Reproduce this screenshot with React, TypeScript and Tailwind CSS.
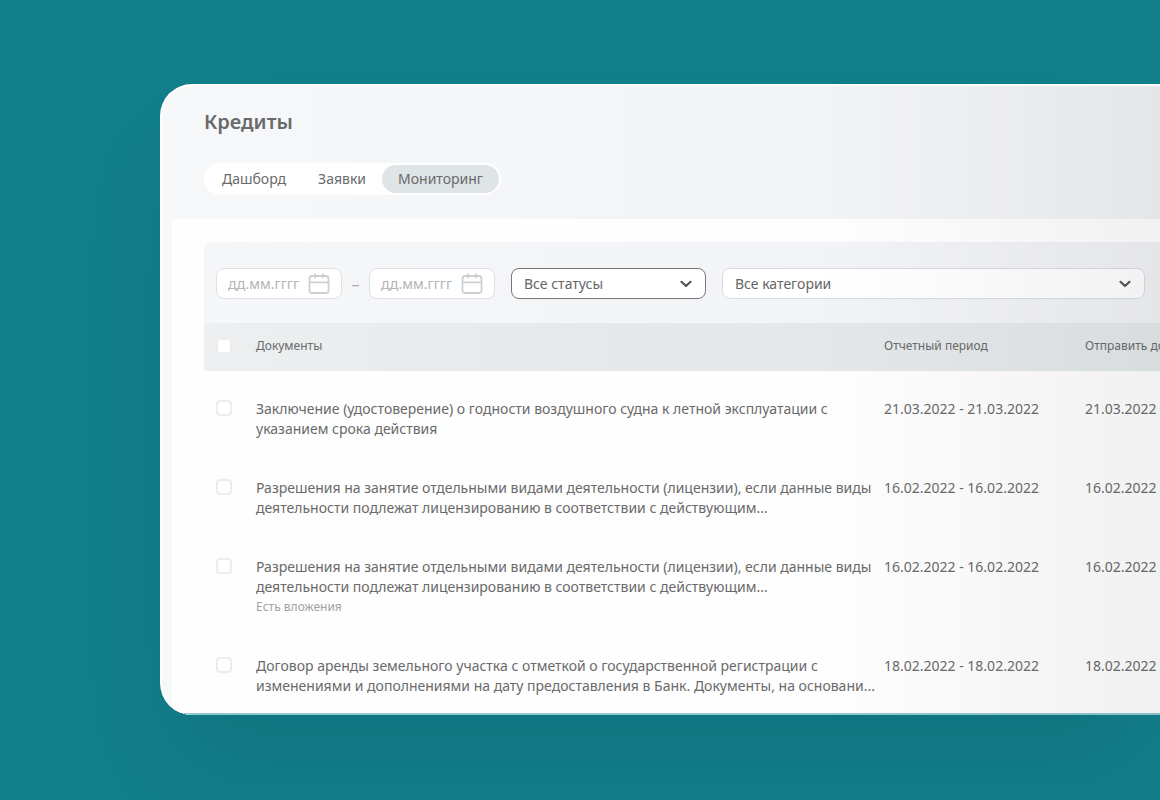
import { useState } from 'react'

const tabs = ['Дашборд', 'Заявки', 'Мониторинг']

const documents = [
  {
    id: 1,
    lines: [
      'Заключение (удостоверение) о годности воздушного судна к летной эксплуатации с',
      'указанием срока действия',
    ],
    period: '21.03.2022 - 21.03.2022',
    deadline: '21.03.2022',
  },
  {
    id: 2,
    lines: [
      'Разрешения на занятие отдельными видами деятельности (лицензии), если данные виды',
      'деятельности подлежат лицензированию в соответствии с действующим...',
    ],
    period: '16.02.2022 - 16.02.2022',
    deadline: '16.02.2022',
  },
  {
    id: 3,
    lines: [
      'Разрешения на занятие отдельными видами деятельности (лицензии), если данные виды',
      'деятельности подлежат лицензированию в соответствии с действующим...',
    ],
    note: 'Есть вложения',
    period: '16.02.2022 - 16.02.2022',
    deadline: '16.02.2022',
  },
  {
    id: 4,
    lines: [
      'Договор аренды земельного участка с отметкой о государственной регистрации с',
      'изменениями и дополнениями на дату предоставления в Банк. Документы, на основани...',
    ],
    period: '18.02.2022 - 18.02.2022',
    deadline: '18.02.2022',
  },
]

function CalendarIcon() {
  return (
    <svg className="h-[22px] w-[22px] shrink-0" viewBox="0 0 22 22" fill="none" stroke="#cdcfd3" strokeWidth="1.8">
      <rect x="1.5" y="3" width="19" height="17" rx="2.5" />
      <path d="M1.5 9.3H20.5M7 0.5V5M15 0.5V5" />
    </svg>
  )
}

function DateField({ label }: { label: string }) {
  return (
    <label className="flex h-[31px] w-[126px] items-center rounded-lg border border-[#dde1e6] bg-white px-[11px]">
      <input
        type="text"
        aria-label={label}
        placeholder="дд.мм.гггг"
        className="min-w-0 flex-1 text-sm text-[#666] outline-none placeholder:text-[#b3b3b6]"
      />
      <CalendarIcon />
    </label>
  )
}

function SelectField({ label, className }: { label: string; className: string }) {
  return (
    <div className={`relative h-[31px] ${className}`}>
      <select
        aria-label={label}
        className="h-full w-full appearance-none rounded-lg border border-inherit bg-white px-3 text-sm text-[#666]"
      >
        <option>{label}</option>
      </select>
      <svg
        className="pointer-events-none absolute top-3 right-[14px] h-2 w-3"
        viewBox="0 0 12 8"
        fill="none"
        stroke="#555"
        strokeWidth="2.2"
        strokeLinecap="round"
        strokeLinejoin="round"
      >
        <path d="M1.5 1.8L6 6L10.5 1.8" />
      </svg>
    </div>
  )
}

function Checkbox({ label }: { label: string }) {
  return (
    <input
      type="checkbox"
      aria-label={label}
      className="block h-4 w-4 appearance-none rounded border-2 border-[#ebedf0] bg-white checked:bg-[#137f8b]"
    />
  )
}

export default function App() {
  const [activeTab, setActiveTab] = useState('Мониторинг')

  return (
    <div className="min-h-screen overflow-hidden bg-[#137f8b] pt-[84px] pb-[85px] pl-40 font-['Noto_Sans',sans-serif] text-[#6a6a6a]">
      <main className="relative overflow-hidden rounded-l-[32px] border-t-2 border-l-2 border-white bg-linear-to-r from-[#f7f8fa] to-[#f0f2f5] pl-[10px] shadow-[0_60px_100px_-20px_rgba(0,40,50,0.14)]">
        <header className="px-8 pt-5 pb-6">
          <h1 className="text-xl leading-8 font-semibold">Кредиты</h1>
          <nav className="mt-[25px] inline-flex h-8 rounded-full bg-white p-0.5">
            {tabs.map((tab) => (
              <button
                key={tab}
                type="button"
                onClick={() => setActiveTab(tab)}
                className={`rounded-full px-4 text-sm ${activeTab === tab ? 'bg-[#dfe4e7]' : ''}`}
              >
                {tab}
              </button>
            ))}
          </nav>
        </header>

        <section className="border-b-2 border-[#8fc9ce] bg-[#fefefe] pt-[23px] pb-1.5 pl-8">
          {/* Filters */}
          <div className="flex items-center rounded-tl-lg bg-linear-to-r from-[#f6f7f9] to-[#f0f2f5] pt-[26px] pr-[15px] pb-6 pl-3">
            <DateField label="Дата с" />
            <span className="w-[27px] text-center text-[#aaa]">–</span>
            <DateField label="Дата по" />
            <SelectField label="Все статусы" className="ml-4 w-[195px] border-[#777]" />
            <SelectField label="Все категории" className="ml-4 flex-1 border-[#d6dce1]" />
          </div>

          {/* Documents */}
          <table className="w-full table-fixed text-left text-sm leading-5 whitespace-nowrap">
            <colgroup>
              <col className="w-[52px]" />
              <col />
              <col className="w-[201px]" />
              <col className="w-[75px]" />
            </colgroup>
            <thead>
              <tr className="h-12 bg-linear-to-r from-[#edeff0] via-[#e4e8eb] to-[#e3e8eb] text-xs">
                <th className="pb-0.5 pl-3">
                  <Checkbox label="Выбрать все" />
                </th>
                <th className="pb-0.5 font-normal">Документы</th>
                <th className="pb-0.5 font-normal">Отчетный период</th>
                <th className="pb-0.5 font-normal">Отправить до</th>
              </tr>
            </thead>
            <tbody>
              {documents.map((doc) => (
                <tr key={doc.id} className="align-top">
                  <td className="pt-[29px] pl-3">
                    <Checkbox label={doc.lines[0]} />
                  </td>
                  <td className="pt-7 pb-[11px]">
                    {doc.lines.map((line) => (
                      <p key={line}>{line}</p>
                    ))}
                    {doc.note && <p className="text-xs leading-5 text-[#a0a2a5]">{doc.note}</p>}
                  </td>
                  <td className="pt-7">{doc.period}</td>
                  <td className="pt-7">{doc.deadline}</td>
                </tr>
              ))}
            </tbody>
          </table>
        </section>

        {/* Shade towards the right edge */}
        <div className="pointer-events-none absolute inset-0 bg-linear-to-r from-transparent from-65% to-black/5" />
      </main>
    </div>
  )
}
